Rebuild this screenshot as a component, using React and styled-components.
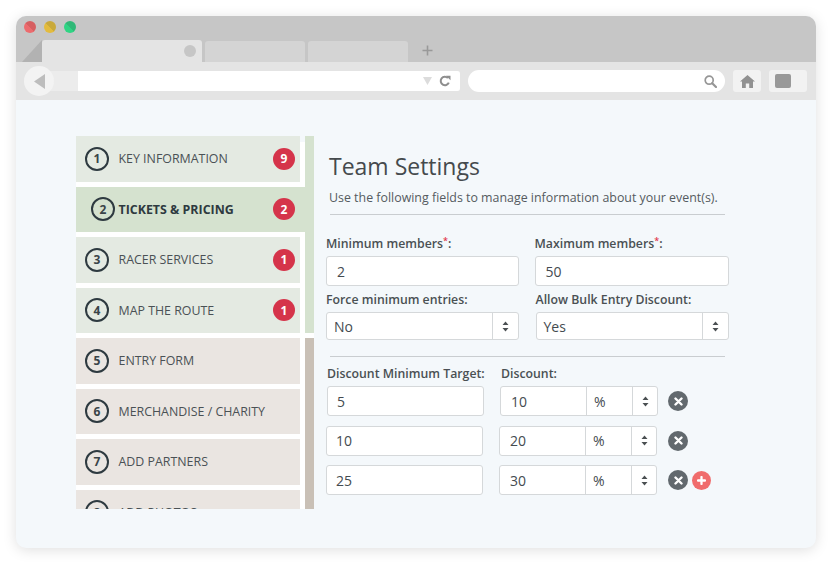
import React from 'react';
import styled, { createGlobalStyle } from 'styled-components';

const Global = createGlobalStyle`
  html, body { margin: 0; padding: 0; background: #fff; }
  body { font-family: "Open Sans", "Liberation Sans", sans-serif; color: #444; }
  * { box-sizing: border-box; }
`;

const Page = styled.div`
  width: 832px;
  height: 567px;
  padding: 16px;
  overflow: hidden;
`;
const Browser = styled.div`
  width: 800px;
  height: 532px;
  border-radius: 10px;
  overflow: hidden;
  background: #f4f8fb;
  box-shadow: 0 2px 14px rgba(0, 0, 0, 0.13);
  display: flex;
  flex-direction: column;
`;
const TitleBar = styled.div`
  height: 46px;
  background: #c6c6c6;
  display: flex;
  flex-direction: column;
  justify-content: space-between;
`;
const Lights = styled.div`
  display: flex;
  gap: 8px;
  padding: 5px 0 0 8px;
`;
const Light = styled.span`
  width: 12px;
  height: 12px;
  border-radius: 50%;
  background: linear-gradient(45deg, ${p => p.$a} 50%, ${p => p.$b} 50%);
`;
const TabStrip = styled.div`
  display: flex;
  align-items: flex-end;
  padding-left: 6px;
`;
const TabCorner = styled.svg`
  width: 20px;
  height: 22px;
  display: block;
`;
const Tab = styled.div`
  width: ${p => (p.$active ? 160 : 100)}px;
  height: ${p => (p.$active ? 22 : 21)}px;
  margin-right: 3px;
  border-radius: 3px 3px 0 0;
  background: ${p => (p.$active ? '#e4e4e4' : '#d4d4d4')};
  display: flex;
  align-items: center;
  justify-content: flex-end;
  padding-right: 6px;
`;
const TabDot = styled.span`
  width: 12px;
  height: 12px;
  border-radius: 50%;
  background: #c6c6c6;
`;
const NewTab = styled.svg`
  width: 11px;
  height: 11px;
  margin: 0 0 6px 11px;
  display: block;
`;
const ToolBar = styled.div`
  height: 38px;
  background: #e4e4e4;
  display: flex;
  align-items: center;
  padding: 0 9px 0 8px;
  gap: 8px;
`;
const AddressGroup = styled.div`
  width: 436px;
  height: 20px;
  display: flex;
  align-items: center;
  background: #ececec;
  border-radius: 15px 3px 3px 15px;
`;
const BackButton = styled.div`
  width: 30px;
  height: 30px;
  flex: none;
  border-radius: 50%;
  background: #f3f3f3;
  display: flex;
  align-items: center;
  justify-content: center;
  margin-right: 24px;
`;
const AddressField = styled.div`
  flex: 1;
  height: 20px;
  background: #fff;
  border-radius: 0 3px 3px 0;
  display: flex;
  align-items: center;
  justify-content: flex-end;
  gap: 7px;
  padding-right: 9px;
`;
const SearchField = styled.div`
  width: 257px;
  height: 22px;
  border-radius: 11px;
  background: #fff;
  display: flex;
  align-items: center;
  justify-content: flex-end;
  padding-right: 8px;
`;
const ToolButton = styled.div`
  width: ${p => p.$w}px;
  height: 22px;
  border-radius: 3px;
  background: #f2f2f2;
  display: flex;
  align-items: center;
  justify-content: ${p => (p.$start ? 'flex-start' : 'center')};
  padding-left: ${p => (p.$start ? 6 : 0)}px;
`;
const Square = styled.span`
  width: 16px;
  height: 14px;
  border-radius: 2px;
  background: #999;
`;
const Body = styled.div`
  flex: 1;
  display: flex;
  align-items: flex-start;
  padding: 36px 0 0 60px;
`;
const Sidebar = styled.nav`
  width: 238px;
  height: 373px;
  flex: none;
  overflow: hidden;
  background: linear-gradient(#f4f8fb 6px, #fff 6px);
  display: flex;
  flex-direction: column;
  gap: 5px;
`;
const Group = styled.div`
  display: flex;
  flex-direction: column;
  gap: 5px;
  border-right: 9px solid ${p => p.$rail};
  flex: none;
`;
const Step = styled.div`
  height: 45.5px;
  flex: none;
  width: ${p => (p.$active ? 229 : 224)}px;
  background: ${p => (p.$active ? '#d5e2cf' : p.$tone)};
  display: flex;
  align-items: center;
  padding: 0 5px 0 ${p => (p.$active ? 15 : 9)}px;
  font-size: 12.4px;
  color: ${p => (p.$active ? '#2e3a40' : '#4a5155')};
  font-weight: ${p => (p.$active ? 700 : 400)};
`;
const StepNumber = styled.span`
  width: 24px;
  height: 24px;
  flex: none;
  border-radius: 50%;
  border: 2px solid #2e3a40;
  display: flex;
  align-items: center;
  justify-content: center;
  font-size: 12px;
  font-weight: 700;
  color: #3a4448;
  margin-right: ${p => (p.$active ? 3.5 : 9.5)}px;
`;
const StepLabel = styled.span`
  flex: 1;
  white-space: nowrap;
`;
const Badge = styled.span`
  width: 22px;
  height: 22px;
  flex: none;
  border-radius: 50%;
  background: #d5344a;
  color: #fff;
  font-size: 12px;
  font-weight: 700;
  display: flex;
  align-items: center;
  justify-content: center;
  margin-right: ${p => (p.$active ? 5 : 0)}px;
`;
const Main = styled.main`
  width: 415px;
  margin-left: 12px;
  display: flex;
  flex-direction: column;
`;
const Heading = styled.h1`
  margin: 14px 0 0 3px;
  font-size: 23px;
  line-height: 32px;
  font-weight: 400;
  color: #454a4d;
`;
const Intro = styled.p`
  margin: 7px 0 0 3px;
  font-size: 12.4px;
  line-height: 18px;
  color: #555b5f;
  white-space: nowrap;
`;
const Rule = styled.hr`
  width: 395px;
  margin: ${p => p.$top}px 0 0 4px;
  border: 0;
  border-top: 1px solid #c9cdd0;
`;
const FieldGrid = styled.div`
  display: grid;
  grid-template-columns: 193px 194.5px;
  column-gap: 15.5px;
  row-gap: 5px;
  margin-top: 20px;
`;
const Field = styled.div`
  display: flex;
  flex-direction: column;
  margin-left: ${p => (p.$nudge ? 1 : 0)}px;
`;
const Label = styled.label`
  font-size: 12.3px;
  font-weight: 600;
  line-height: 18px;
  color: #4a5053;
  margin-bottom: 2px;
  white-space: nowrap;
`;
const Star = styled.span`
  color: #e2384d;
  font-size: 9px;
  position: relative;
  top: -4px;
`;
const Input = styled.div`
  height: 30px;
  width: ${p => p.$w || 'auto'};
  background: #fff;
  border: 1px solid #d5d8da;
  border-radius: 3px;
  display: flex;
  align-items: center;
  padding-left: ${p => p.$pad || 10}px;
  font-size: 14px;
  color: #444b50;
`;
const Select = styled.div`
  height: 28px;
  margin-top: 1px;
  background: #fff;
  border: 1px solid #d5d8da;
  border-radius: 3px;
  display: grid;
  grid-template-columns: 1fr 26px;
  align-items: stretch;
  font-size: 14px;
  color: #444b50;
`;
const SelectValue = styled.span`
  display: flex;
  align-items: center;
  padding-left: 7px;
`;
const Stepper = styled.span`
  border-left: 1px solid #d5d8da;
  display: flex;
  align-items: center;
  justify-content: center;
`;
const DiscountLabels = styled.div`
  display: grid;
  grid-template-columns: 174px auto;
  margin-top: 8px;
  margin-bottom: 1px;
  padding-left: 1px;
`;
const DiscountRows = styled.div`
  display: flex;
  flex-direction: column;
  gap: 9.5px;
`;
const DiscountRow = styled.div`
  display: flex;
  align-items: center;
  padding-left: ${p => (p.$nudge ? 1 : 0)}px;
`;
const InputGroup = styled.div`
  width: 158px;
  height: 30px;
  margin-left: 16px;
  background: #fff;
  border: 1px solid #d5d8da;
  border-radius: 3px;
  display: grid;
  grid-template-columns: 85px 46px 1fr;
  font-size: 14px;
  color: #444b50;
`;
const GroupCell = styled.span`
  display: flex;
  align-items: center;
  padding-left: ${p => (p.$first ? 10 : 7)}px;
  border-left: ${p => (p.$first ? 0 : '1px solid #d5d8da')};
`;
const RoundButton = styled.span`
  width: ${p => p.$size}px;
  height: ${p => p.$size}px;
  flex: none;
  border-radius: 50%;
  background: ${p => p.$bg};
  display: flex;
  align-items: center;
  justify-content: center;
  margin-left: ${p => p.$left}px;
`;

const Arrows = () => (
  <svg width="7" height="11" viewBox="0 0 7 11">
    <path d="M3.5 0.5 L6.5 4 H0.5Z M3.5 10.5 L6.5 7 H0.5Z" fill="#4a4f52" />
  </svg>
);
const Cross = () => (
  <svg width="9" height="9" viewBox="0 0 9 9">
    <path d="M1.5 1.5 L7.5 7.5 M7.5 1.5 L1.5 7.5" stroke="#fff" strokeWidth="2.4" strokeLinecap="round" />
  </svg>
);
const Plus = () => (
  <svg width="9" height="9" viewBox="0 0 9 9">
    <path d="M4.5 1 V8 M1 4.5 H8" stroke="#fff" strokeWidth="2.3" strokeLinecap="round" />
  </svg>
);

const green = [
  ['1', 'KEY INFORMATION', '9'],
  ['2', 'TICKETS & PRICING', '2', true],
  ['3', 'RACER SERVICES', '1'],
  ['4', 'MAP THE ROUTE', '1'],
];
const brown = [
  ['5', 'ENTRY FORM'],
  ['6', 'MERCHANDISE / CHARITY'],
  ['7', 'ADD PARTNERS'],
  ['8', 'ADD PHOTOS'],
];

const StepItem = ({ n, label, badge, active, tone }) => (
  <Step $active={active} $tone={tone}>
    <StepNumber $active={active}>{n}</StepNumber>
    <StepLabel>{label}</StepLabel>
    {badge && <Badge $active={active}>{badge}</Badge>}
  </Step>
);

const discounts = [['5', '10', true], ['10', '20'], ['25', '30']];

export default function App() {
  return (
    <Page>
      <Global />
      <Browser>
        <TitleBar>
          <Lights>
            <Light $a="#ec6b6e" $b="#d65f61" />
            <Light $a="#e3bb3d" $b="#c9a93a" />
            <Light $a="#2fd483" $b="#30b877" />
          </Lights>
          <TabStrip>
            <TabCorner viewBox="0 0 20 22">
              <path d="M0 22 L20 0 V22Z" fill="#b2b2b2" />
            </TabCorner>
            <Tab $active><TabDot /></Tab>
            <Tab />
            <Tab />
            <NewTab viewBox="0 0 11 11">
              <path d="M5.5 0.5 V10.5 M0.5 5.5 H10.5" stroke="#999" strokeWidth="1.6" />
            </NewTab>
          </TabStrip>
        </TitleBar>
        <ToolBar>
          <AddressGroup>
            <BackButton>
              <svg width="11" height="15" viewBox="0 0 11 15">
                <path d="M11 0 V15 L0 7.5Z" fill="#bdbdbd" />
              </svg>
            </BackButton>
            <AddressField>
              <svg width="9" height="8" viewBox="0 0 9 8">
                <path d="M0 0 H9 L4.5 8Z" fill="#dcdcdc" />
              </svg>
              <svg width="12" height="12" viewBox="0 0 12 12">
                <path d="M9.8 7.6 A4.2 4.2 0 1 1 8.9 3" fill="none" stroke="#8e8e8e" strokeWidth="2" />
                <path d="M7 0.8 L11.5 0.8 L11.5 5.3Z" fill="#8e8e8e" />
              </svg>
            </AddressField>
          </AddressGroup>
          <SearchField>
            <svg width="13" height="13" viewBox="0 0 13 13">
              <circle cx="5.2" cy="5.2" r="4" fill="none" stroke="#969696" strokeWidth="1.7" />
              <path d="M8.2 8.2 L12 12" stroke="#969696" strokeWidth="2.2" strokeLinecap="round" />
            </svg>
          </SearchField>
          <ToolButton $w={28}>
            <svg width="15" height="13" viewBox="0 0 15 13">
              <path d="M7.5 0 L15 6.6 H13 V13 H9.2 V8.6 H5.8 V13 H2 V6.6 H0Z" fill="#919191" />
            </svg>
          </ToolButton>
          <ToolButton $w={38} $start><Square /></ToolButton>
        </ToolBar>
        <Body>
          <Sidebar>
            <Group $rail="#d5e2cf">
              {green.map(([n, l, b, a]) => (
                <StepItem key={n} n={n} label={l} badge={b} active={a} tone="#e4eae2" />
              ))}
            </Group>
            <Group $rail="#c9c0b6">
              {brown.map(([n, l]) => (
                <StepItem key={n} n={n} label={l} tone="#eae5e1" />
              ))}
            </Group>
          </Sidebar>
          <Main>
            <Heading>Team Settings</Heading>
            <Intro>Use the following fields to manage information about your event(s).</Intro>
            <Rule $top={7} />
            <FieldGrid>
              <Field>
                <Label>Minimum members<Star>*</Star>:</Label>
                <Input>2</Input>
              </Field>
              <Field>
                <Label>Maximum members<Star>*</Star>:</Label>
                <Input>50</Input>
              </Field>
              <Field>
                <Label>Force minimum entries:</Label>
                <Select><SelectValue>No</SelectValue><Stepper><Arrows /></Stepper></Select>
              </Field>
              <Field $nudge>
                <Label>Allow Bulk Entry Discount:</Label>
                <Select><SelectValue>Yes</SelectValue><Stepper><Arrows /></Stepper></Select>
              </Field>
            </FieldGrid>
            <Rule $top={16} />
            <DiscountLabels>
              <Label>Discount Minimum Target:</Label>
              <Label>Discount:</Label>
            </DiscountLabels>
            <DiscountRows>
              {discounts.map(([target, pct, nudge], i) => (
                <DiscountRow key={target} $nudge={nudge}>
                  <Input $w="157px" $pad={9}>{target}</Input>
                  <InputGroup>
                    <GroupCell $first>{pct}</GroupCell>
                    <GroupCell>%</GroupCell>
                    <Stepper><Arrows /></Stepper>
                  </InputGroup>
                  <RoundButton $size={20} $bg="#62696e" $left={nudge ? 10 : 11}><Cross /></RoundButton>
                  {i === 2 && <RoundButton $size={19} $bg="#f06c6c" $left={4}><Plus /></RoundButton>}
                </DiscountRow>
              ))}
            </DiscountRows>
          </Main>
        </Body>
      </Browser>
    </Page>
  );
}
